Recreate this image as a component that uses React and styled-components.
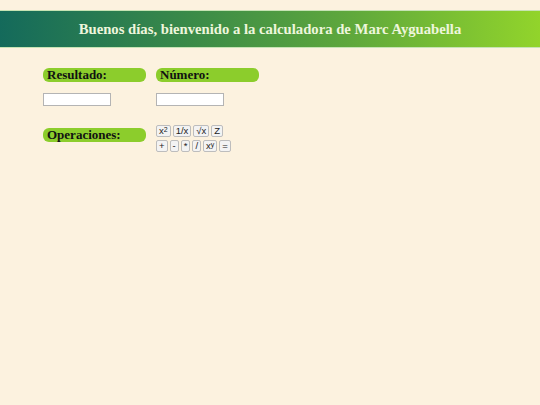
import React from "react";
import styled, { createGlobalStyle } from "styled-components";

const GlobalStyle = createGlobalStyle`
  body {
    margin: 0;
    background: #fcf2df;
    font-family: "Liberation Serif", "Times New Roman", serif;
  }
`;

const Page = styled.div`
  min-height: 100vh;
  padding-top: 10px;
  box-sizing: border-box;
`;

const Header = styled.header`
  height: 38px;
  display: flex;
  align-items: center;
  justify-content: center;
  box-sizing: border-box;
  border-top: 1px solid #c7e3b4;
  border-bottom: 1px solid #c7e3b4;
  background: linear-gradient(to right, #146a5b 0%, #3a8a48 35%, #5fa83c 65%, #92d42b 100%);
`;

const Title = styled.h1`
  margin: 0;
  font-size: 14.7px;
  font-weight: 700;
  color: #eef6dc;
`;

const Form = styled.div`
  display: grid;
  grid-template-columns: 103px 103px;
  column-gap: 10px;
  row-gap: 11px;
  padding: 20px 0 0 43px;
  align-items: start;
`;

const Label = styled.div`
  height: 14px;
  line-height: 14px;
  padding-left: 4px;
  border-radius: 6px;
  background: #8ccd2c;
  color: #111;
  font-size: 13px;
  font-weight: 700;
  margin-top: ${(p) => p.$offset || 0}px;
`;

const Field = styled.input`
  width: 68px;
  height: 13px;
  box-sizing: border-box;
  margin: 0;
  padding: 0 2px;
  border: 1px solid #b4b4b4;
  background: #fff;
  font-size: 9px;
`;

const Keypad = styled.div`
  display: flex;
  flex-direction: column;
  gap: 3px;
  margin-top: 8px;
`;

const KeyRow = styled.div`
  display: flex;
  gap: 2px;
`;

const Key = styled.button`
  height: 12px;
  margin: 0;
  padding: 0 2px;
  box-sizing: border-box;
  display: flex;
  align-items: center;
  border: 1px solid #bdbdbd;
  border-radius: 2px;
  background: #f3f3f3;
  color: #222;
  font-family: "Liberation Sans", Arial, sans-serif;
  font-size: 9.5px;
  line-height: 1;

  sup {
    font-size: 7px;
    position: relative;
    top: -2px;
    vertical-align: baseline;
  }
`;

const rowOne = [
  <>x<sup>2</sup></>,
  "1/x",
  "√x",
  "Z",
];

const rowTwo = ["+", "-", "*", "/", <>x<sup>y</sup></>, "="];

export default function App() {
  return (
    <Page>
      <GlobalStyle />
      <Header>
        <Title>Buenos días, bienvenido a la calculadora de Marc Ayguabella</Title>
      </Header>
      <Form>
        <Label>Resultado:</Label>
        <Label>Número:</Label>
        <Field type="text" />
        <Field type="text" />
        <Label $offset={11}>Operaciones:</Label>
        <Keypad>
          <KeyRow>
            {rowOne.map((k, i) => (
              <Key key={i}>{k}</Key>
            ))}
          </KeyRow>
          <KeyRow>
            {rowTwo.map((k, i) => (
              <Key key={i}>{k}</Key>
            ))}
          </KeyRow>
        </Keypad>
      </Form>
    </Page>
  );
}
